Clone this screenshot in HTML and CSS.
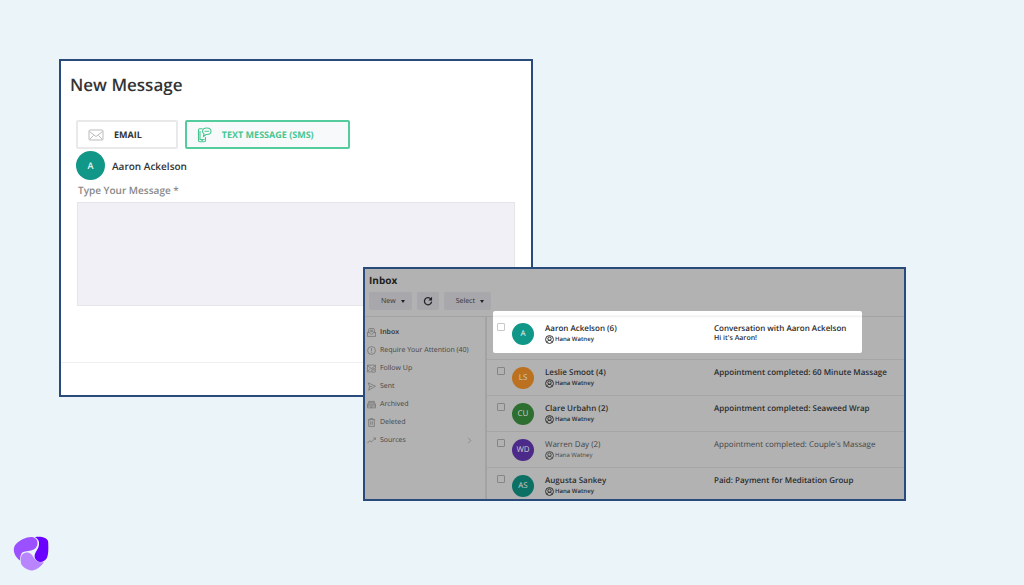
FILE: index.html
```html
<!DOCTYPE html>
<html lang="en">
<head>
<meta charset="utf-8">
<title>Messages</title>
<meta name="viewport" content="width=device-width, initial-scale=1">
<link rel="stylesheet" href="styles.css">
</head>
<body>
<svg class="sprite" width="0" height="0" aria-hidden="true">
  <symbol id="person" viewBox="0 0 16 16"><g fill="none" stroke="currentColor" stroke-width="1.7"><circle cx="8" cy="8" r="7"/><circle cx="8" cy="6.5" r="3"/><path d="M3.500 13c.5-2.500 2.200-3.500 4.500-3.500s4 1 4.500 3.500"/></g></symbol>
</svg>
<main class="canvas">
  <section class="window composer">
    <h1 class="composer-title">New Message</h1>
    <form class="composer-form">
      <div class="channels">
        <button type="button" class="channel channel-email">
          <svg class="icon-mail" viewBox="0 0 16 12"><g fill="none" stroke="currentColor"><rect x="1" y="1" width="14" height="10" rx="1"/><path d="M1.500 2.500 8 7.500l6.500-5M1.500 10.500l4-4M14.500 10.500l-4-4"/></g></svg>
          EMAIL
        </button>
        <button type="button" class="channel channel-sms">
          <svg class="icon-sms" viewBox="0 0 14 16"><g fill="none" stroke="currentColor" stroke-width="1.100"><path d="M5 1.800H2.200C1.400 1.800 1 2.200 1 3v10.500c0 .8.4 1.200 1.200 1.200h4.600c.8 0 1.200-.4 1.200-1.200V10M2.500 4v8.500H7M3.800 13.500h1.500"/><path d="M9.300 1C6.800 1 5 2.300 5 4.300c0 1.200.6 2 1.500 2.600L6 9.500l2.500-2h.8c2.500 0 4.200-1.300 4.200-3.200S11.800 1 9.300 1ZM7 4.300h4.600"/></g></svg>
          TEXT MESSAGE (SMS)
        </button>
      </div>
      <div class="recipient"><span class="avatar avatar-large teal">A</span>Aaron Ackelson</div>
      <label class="message-label" for="message">Type Your Message *</label>
      <textarea class="message-box" id="message"></textarea>
    </form>
    <footer class="composer-footer"></footer>
  </section>

  <section class="window inbox">
    <header class="inbox-header">
      <h2 class="inbox-title">Inbox</h2>
      <div class="toolbar">
        <button type="button" class="tool">New <span class="caret"></span></button>
        <button type="button" class="tool tool-refresh" aria-label="Refresh"><svg viewBox="0 0 16 16"><path d="M12.500 4.500A5.800 5.800 0 1 0 13.800 9" fill="none" stroke="currentColor" stroke-width="2"/><path d="M14.500 1v6H8.500Z" fill="currentColor"/></svg></button>
        <button type="button" class="tool tool-select">Select <span class="caret"></span></button>
      </div>
    </header>
    <div class="inbox-body">
      <nav class="folders">
        <a class="folder current" href="#"><svg viewBox="0 0 16 16"><path d="M3 7V2.500C3 1.500 3.500 1 4.500 1h7c1 0 1.500.5 1.500 1.500V7M1 8l2-2.500M15 8l-2-2.500M1 8v7h14V8h-4c0 2-1 3-3 3S5 10 5 8ZM5.500 4h5M5.500 6h5"/></svg>Inbox</a>
        <a class="folder" href="#"><svg viewBox="0 0 16 16"><circle cx="8" cy="8" r="7"/><path d="M8 3.500v6M8 11v1.500"/></svg>Require Your Attention (40)</a>
        <a class="folder" href="#"><svg viewBox="0 0 16 16"><path d="M9 14H.8V2h14.400v6M1 3l7 5 7-5M1 13l5-5"/><circle cx="12" cy="11.500" r="3.500"/><path d="M12 9.500v2h1.500"/></svg>Follow Up</a>
        <a class="folder" href="#"><svg viewBox="0 0 16 16"><path d="m2 1.500 13 6-12 7 1.500-6.500ZM4.500 8H9"/></svg>Sent</a>
        <a class="folder" href="#"><svg viewBox="0 0 16 16"><path d="M1 7.500h14V14H1ZM1 7.500 3 5h10l2 2.500M3 5V2.500h10V5M1 10.500h14M6 12.500h4"/></svg>Archived</a>
        <a class="folder" href="#"><svg viewBox="0 0 16 16"><path d="M1.500 3h13M3 3v12h10V3M5.500 3V1h5v2M6.500 6v6M9.500 6v6"/></svg>Deleted</a>
        <a class="folder" href="#"><svg viewBox="0 0 16 16"><path d="m.8 12.500 4-4 3.200 2L14.500 4M11 3.500h4V7"/></svg>Sources<svg class="chevron" viewBox="0 0 16 16"><path d="m5 2 6 6-6 6"/></svg></a>
      </nav>
      <ul class="threads">
        <li class="thread highlighted">
          <input class="pick" type="checkbox" aria-label="Select Aaron Ackelson">
          <span class="avatar teal">A</span>
          <div class="who"><div class="name">Aaron Ackelson (6)</div><div class="detail"><svg><use href="#person"/></svg>Hana Watney</div></div>
          <div class="what"><div class="name">Conversation with Aaron Ackelson</div><div class="detail preview">Hi it's Aaron!</div></div>
        </li>
        <li class="thread">
          <input class="pick" type="checkbox" aria-label="Select Leslie Smoot">
          <span class="avatar orange">LS</span>
          <div class="who"><div class="name">Leslie Smoot (4)</div><div class="detail"><svg><use href="#person"/></svg>Hana Watney</div></div>
          <div class="what"><div class="name">Appointment completed: 60 Minute Massage</div></div>
        </li>
        <li class="thread">
          <input class="pick" type="checkbox" aria-label="Select Clare Urbahn">
          <span class="avatar green">CU</span>
          <div class="who"><div class="name">Clare Urbahn (2)</div><div class="detail"><svg><use href="#person"/></svg>Hana Watney</div></div>
          <div class="what"><div class="name">Appointment completed: Seaweed Wrap</div></div>
        </li>
        <li class="thread read">
          <input class="pick" type="checkbox" aria-label="Select Warren Day">
          <span class="avatar purple">WD</span>
          <div class="who"><div class="name">Warren Day (2)</div><div class="detail"><svg><use href="#person"/></svg>Hana Watney</div></div>
          <div class="what"><div class="name">Appointment completed: Couple's Massage</div></div>
        </li>
        <li class="thread">
          <input class="pick" type="checkbox" aria-label="Select Augusta Sankey">
          <span class="avatar dark-teal">AS</span>
          <div class="who"><div class="name">Augusta Sankey</div><div class="detail"><svg><use href="#person"/></svg>Hana Watney</div></div>
          <div class="what"><div class="name">Paid: Payment for Meditation Group</div></div>
        </li>
      </ul>
    </div>
  </section>

  <svg class="logo" viewBox="0 0 36 36" role="img" aria-label="Logo">
    <path fill="#9b51ff" d="M3 8C7 4 13 1 18 1c4 0 6.500 2.500 6.500 6 0 4-2.500 6.500-6.500 7.500-4 1-8 .5-9.500 3-1.200 2-1.200 4.500-1.500 7C1.500 21-1.500 13 3 8Z"/>
    <path fill="#6a00ff" d="M22 1.200c5-1 13 0 13.200 5 .3 7 .3 12-1.200 15.500-2 4-7 5.500-10 3-3-2.300-3-5.500-1-9 1.800-3 3.500-5.500 3-9.500-.3-2-1.500-4-4-5Z"/>
    <path fill="#b885ff" d="M7.800 26C7.500 20 9 17.300 13 16.500c4-.5 6 2 8 5.500 2 3 5 5 10 4C28 31 22 35 18.500 34.500 14 34 8 30.500 7.800 26Z"/>
  </svg>
</main>
</body>
</html>
```
FILE: styles.css
```css
* { box-sizing: border-box; }

body {
  margin: 0;
  background: #ebf5f9;
  font-family: "Open Sans", "Noto Sans", sans-serif;
  color: #333;
  text-rendering: geometricPrecision;
}

h1, h2, ul { margin: 0; padding: 0; }
button { font-family: inherit; margin: 0; text-rendering: inherit; }
.sprite { display: block; }

.canvas { position: relative; min-height: 100vh; overflow: hidden; }
.window { position: absolute; border: 2px solid #294b7c; }

/* Composer */
.composer { left: 59px; right: 491px; top: 59px; background: #fff; }
.composer-title { padding: 11px 9px 0; font-size: 17px; line-height: 26px; font-weight: 600; color: #333; }
.composer-form { padding: 22px 16px 56px; }

.channels { display: flex; gap: 7px; margin-left: -1px; }
.channel {
  display: flex;
  align-items: center;
  height: 29px;
  padding: 0 34px 0 10px;
  gap: 10px;
  border: 2px solid #e9e9e9;
  border-radius: 2px;
  background: #fff;
  font-size: 9px;
  font-weight: 700;
  color: #333;
}
.channel-sms { border-color: #55cc9d; background: #f8f9fb; color: #46c792; }
.icon-mail { width: 16px; height: 12px; color: #bbb; }
.icon-sms { width: 15px; height: 16px; }

.recipient { display: flex; align-items: center; gap: 7px; margin: 2px 0 0 -1px; font-size: 10px; line-height: 14px; font-weight: 600; }

.avatar {
  display: flex;
  align-items: center;
  justify-content: center;
  width: 22px;
  height: 22px;
  flex: none;
  border-radius: 50%;
  font-size: 8px;
  line-height: 8px;
  font-weight: 500;
  color: #ccc;
}
.avatar-large { width: 29px; height: 29px; font-size: 9px; font-weight: 600; color: #e6f4f2; }
.teal { background: #109788; color: #e6f4f2; }
.orange { background: #bc7120; }
.green { background: #2c6f31; }
.purple { background: #4c2a8a; }
.dark-teal { background: #0c7065; }

.message-label { display: block; margin: 4px 0 5px 1px; font-size: 10px; line-height: 13px; font-weight: 600; color: #888; }
.message-box {
  display: block;
  width: 100%;
  height: 104px;
  border: 1px solid #e6e6e9;
  border-radius: 0;
  background: #f0f0f6;
  resize: none;
}
.composer-footer { height: 33px; border-top: 1px solid #f0f0f0; }

/* Inbox */
.inbox { left: 363px; right: 118px; top: 267px; background: #b2b2b2; }
.inbox-header { padding: 4px 4px 6px; border-bottom: 1px solid #a3a3a3; }
.inbox-title { font-size: 10px; line-height: 14px; font-weight: 700; color: #202020; }
.toolbar { display: flex; gap: 5px; padding-top: 5px; }
.tool {
  display: flex;
  align-items: center;
  gap: 5px;
  height: 18px;
  padding: 0 7px 0 12px;
  border: 0;
  border-radius: 2px;
  background: #a7a7ac;
  font-size: 7px;
  color: #333;
}
.tool-refresh { padding: 0 6px; color: #222; }
.tool-refresh svg { width: 10px; height: 10px; }
.caret { border: 2px solid transparent; border-top: 3px solid #222; border-bottom: 0; }

.inbox-body { display: flex; }
.folders { flex: 0 0 122px; padding: 6px 12px 0 2px; border-right: 2px solid #a3a3a3; }
.folder { display: flex; align-items: center; gap: 4px; height: 18px; font-size: 7px; color: #454545; text-decoration: none; white-space: nowrap; }
.current { font-weight: 600; color: #333; }
.folder svg { width: 9px; height: 9px; flex: none; fill: none; stroke: #707070; stroke-width: 1.3; }
.folder .chevron { width: 7px; height: 7px; margin-left: auto; }

.threads { flex: 1; min-width: 0; list-style: none; }
.thread {
  display: grid;
  grid-template-columns: 8px 22px 162px 1fr;
  column-gap: 7px;
  align-items: start;
  height: 36px;
  padding: 7px 10px 0;
  border-top: 1px solid #a5a5a5;
}
.thread:last-child { height: 32px; }
.pick { appearance: none; width: 8px; height: 8px; margin: 0; border: 1px solid #858585; border-radius: 1px; }
.who, .what { padding-left: 4px; }
.name { font-size: 8px; line-height: 11px; font-weight: 600; color: #2b2b2b; white-space: nowrap; }
.detail { display: flex; align-items: center; gap: 1px; font-size: 6px; line-height: 10px; font-weight: 600; color: #2b2b2b; }
.detail svg { width: 9px; height: 9px; }
.preview { font-size: 7px; }
.read .name, .read .detail { font-weight: 400; color: #444; }

.highlighted { position: relative; z-index: 0; height: 42px; padding-top: 6px; border-top: 0; }
.highlighted::before {
  content: "";
  position: absolute;
  z-index: -1;
  inset: -6px 42px 6px 6px;
  border-radius: 2px;
  background: linear-gradient(#fff 4px, #eee 5px, #fff 7px);
}
.highlighted .pick { border-color: #c8c8c8; }

.logo { position: absolute; left: 13px; bottom: 13px; width: 36px; height: 36px; }
```
